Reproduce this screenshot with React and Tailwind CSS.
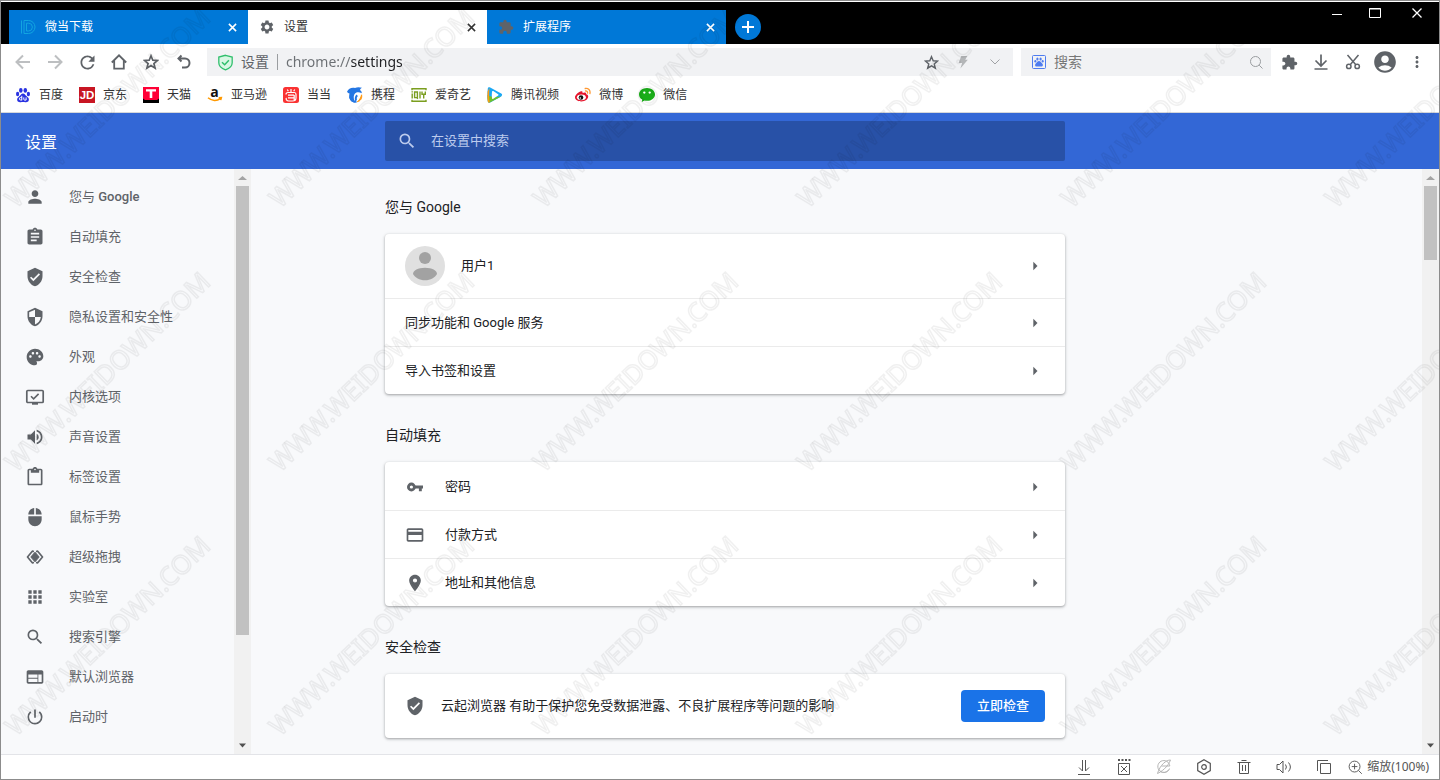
import {
  MdAccountCircle,
  MdApps,
  MdArrowRight,
  MdAssignment,
  MdContentPaste,
  MdCreditCard,
  MdExtension,
  MdMoreVert,
  MdMouse,
  MdPalette,
  MdPerson,
  MdPlace,
  MdPowerSettingsNew,
  MdRefresh,
  MdSearch,
  MdSecurity,
  MdSettings,
  MdVerifiedUser,
  MdVolumeUp,
  MdWeb,
} from 'react-icons/md';

const Svg = ({ size = 16, box = 16, children, className = '', ...rest }) => (
  <svg width={size} height={size} viewBox={`0 0 ${box} ${box}`} fill="none" aria-hidden="true" className={`shrink-0 ${className}`} {...rest}>
    {children}
  </svg>
);

const Stroke = ({ children, width = 1, ...rest }) => (
  <Svg stroke="currentColor" strokeWidth={width} {...rest}>
    {children}
  </Svg>
);

/* ---------- settings icons ---------- */

const KernelIcon = ({ size }) => (
  <Svg size={size} box={20}>
    <rect x="1.800" y="3.500" width="16.400" height="12" rx="1" stroke="currentColor" strokeWidth="1.7" />
    <path d="M6 9.3l2.6 2.6 5-5" stroke="currentColor" strokeWidth="1.6" />
    <path d="M7 15.500h6v2.200H7z" fill="currentColor" />
  </Svg>
);

const DragIcon = ({ size }) => (
  <Svg size={size} box={20}>
    <path d="M10 5.2l4.2 4.8-4.2 4.8L5.800 10z" fill="currentColor" stroke="currentColor" strokeWidth="1" strokeLinejoin="round" />
    <path d="M9 4.500L7.300 4.200 2.500 10l4.800 5.800 1.700-.3M11 4.500l1.700-.3 4.800 5.800-4.800 5.800-1.700-.3" stroke="currentColor" strokeWidth="1.700" strokeLinejoin="round" />
  </Svg>
);

const KeyIcon = ({ size, className }) => (
  <Svg size={size} box={20} className={className}>
    <circle cx="6.400" cy="10" r="3" stroke="currentColor" strokeWidth="2.800" />
    <path d="M10 8.600h8v2.900h-1.200v2.700h-2.900v-2.700H10z" fill="currentColor" />
  </Svg>
);

/* ---------- site logos ---------- */

const WeidownLogo = () => (
  <Stroke stroke="#12a5e0" width={1}>
    <path d="M1.500 1.500v13M4 14.500V1.500h4.500a6.500 6.500 0 0 1 0 13H4M6.500 12V4.200h2a3.900 3.900 0 0 1 0 7.800z" />
  </Stroke>
);

const BaiduLogo = () => (
  <Svg fill="#2932e1">
    <ellipse cx="5.800" cy="3.400" rx="1.800" ry="2.400" />
    <ellipse cx="10.300" cy="3.400" rx="1.800" ry="2.400" />
    <ellipse cx="2.600" cy="7" rx="1.600" ry="2.200" />
    <ellipse cx="13.400" cy="7" rx="1.600" ry="2.200" />
    <path d="M8 6.500c1.700 0 2.400 1.700 3.700 2.800 1.500 1.300 2.500 2.300 2.100 4-.4 1.800-2 2.100-3.500 1.900-1.600-.2-3-.2-4.600 0-1.500.2-3.100-.2-3.500-1.900-.3-1.700.6-2.700 2.100-4C5.600 8.200 6.300 6.500 8 6.500z" />
    <path d="M6.800 8.800v4.500M6.800 13H5.600a1.100 1.100 0 0 1 0-2.400h1.200M8.800 10.400v1.900q0 .8.800.8h1.500v-2.700" stroke="#fff" fill="none" />
  </Svg>
);

const JdLogo = () => (
  <Svg>
    <path d="M0 0h16v16H0z" fill="#c81623" />
    <text x="8" y="12.200" textAnchor="middle" fill="#fff" fontSize="11.500" fontWeight="700" fontFamily="Liberation Sans, sans-serif">JD</text>
  </Svg>
);

const TmallLogo = () => (
  <Svg>
    <path d="M0 0h16v16H0z" fill="#ff0036" />
    <path d="M0 11.500l2 1.500h12l2-1.500V16H0z" fill="#000" />
    <path d="M3 2.200h10v2.300H9.300V11H6.700V4.500H3z" fill="#fff" />
  </Svg>
);

const AmazonLogo = () => (
  <Svg className="overflow-visible">
    <text x="7.500" y="9.500" textAnchor="middle" fill="#111" fontSize="14" fontWeight="700" fontFamily="Open Sans, sans-serif">a</text>
    <path d="M1 10.800c4 3.400 9 3.400 12.300.8M11.700 10.700l2.700-.1-.7 2.500" stroke="#f90" strokeWidth="1.500" />
  </Svg>
);

const DangdangLogo = () => (
  <Svg>
    <rect width="16" height="16" rx="2.500" fill="#fa3232" />
    <path d="M8 2v3M4.300 2.500l1 1.800M11.700 2.500l-1 1.800M3 7.500c0-1.500 1-2 2-2h6.500c1.500 0 1.500 1 1.500 2v3.500c0 2-1.500 3-3.500 3H6c-2.500 0-3.500-2-2.500-3M5 8.200h6M5 10.800h6M11.200 8v5" stroke="#fff" strokeWidth="1.200" />
  </Svg>
);

const CtripLogo = () => (
  <Svg>
    <path d="M0 4.700C1.500 1.500 4.500.2 8 1c2-.9 4.500-.9 7-.2-1.200.7-1.700 1.400-2 2.200 1.200.8 1.700 1.800 1.800 3.200C12 4.800 9.500 5 8 6.500 6.300 8.500 6.300 12 8.500 15.800 3.500 15.500 1.200 11 2.500 6.500 1.500 6.300.6 5.700 0 4.700z" fill="#2577e3" />
    <path d="M3 9.500c.6 3.200 3 5.300 6.500 5.200M9 13.500c-.5-2-.2-4 1.200-5.300" stroke="#2577e3" strokeWidth="1.900" />
    <path d="M14.600 7.800c.6 3.200-.8 6.200-4.300 6.900 2.100-1.500 3.500-3.700 4.300-6.900z" fill="#ff9a14" stroke="#ff9a14" />
  </Svg>
);

const IqiyiLogo = () => (
  <Svg stroke="#7b9e1f" strokeWidth="1.400">
    <path d="M1 3.200V1.700h14v1.500M1 12.800v1.500h14v-1.500" />
    <path d="M1.200 6.500v5M1.200 4.200v1.200M3.600 5h2.800v5.600H3.600zM5.500 10l1.300 1.800M9 4.400v7.200M11 4.400v2.800h3.300V4.400M12.700 7.200v4.400" />
  </Svg>
);

const TencentLogo = () => (
  <Svg>
    <path d="M.8 1.600C1 .2 2.200.1 3.200.6l11 6c1.200.7 1.300 2 0 2.800l-11 6c-1.200.6-2.200.2-2.400-1.200-.5-4-.5-8.400 0-12.600z" fill="#1ba8f5" />
    <path d="M.5 8c0 2.200 0 4.200.3 6.300.2 1.300 1.300 1.600 2.400 1l11-5.900C11 9.800 5 11 .5 8z" fill="#6fc12c" />
    <path d="M.6 4.500C.4 8 .5 11.500.8 14.300c.2 1.200 1.100 1.500 2 1.200C2 11 2 7.500 2.500 1z" fill="#ff9b12" />
    <path d="M5 4.700c.1-.8.700-.9 1.300-.6l4.800 3.100c.6.400.6 1 0 1.400l-4.800 3.200c-.7.400-1.200.2-1.300-.6-.3-2.200-.3-4.300 0-6.500z" fill="#fff" />
  </Svg>
);

const WeiboLogo = () => (
  <Svg>
    <path d="M6.300 4.200c1-.3 1.600.4 1.200 1.800 2-.8 4-.8 3.700 1.200 1.300.4 2 1.100 2 2.300 0 2.500-3 4.900-6.800 4.900C3 14.400 0 12.700 0 10.200 0 7.800 3.800 4.800 6.300 4.200z" fill="#e6162d" />
    <ellipse cx="6.400" cy="10.300" rx="4.500" ry="2.900" fill="#fff" />
    <circle cx="6" cy="10.500" r="2.300" fill="#111" />
    <circle cx="5.300" cy="11" r=".8" fill="#fff" />
    <path d="M10.200 1.500c3-.6 5.500 1.800 4.700 5M10.500 4c1.400-.2 2.300.7 2 2" stroke="#ff9933" strokeWidth="1.300" strokeLinecap="round" />
  </Svg>
);

const WechatLogo = () => (
  <Svg>
    <path d="M8 1c4.500 0 8 2.800 8 6.400s-3.500 6.400-8 6.400c-.9 0-1.700-.1-2.500-.3L2.800 15l.4-2.500C1.200 11.400 0 9.500 0 7.400 0 3.800 3.500 1 8 1z" fill="#1aad19" />
    <ellipse cx="5.300" cy="5.600" rx="1.200" ry="1.100" fill="#fff" />
    <ellipse cx="10.700" cy="5.600" rx="1.200" ry="1.100" fill="#fff" />
  </Svg>
);

const PawIcon = () => (
  <Svg>
    <rect x="1.500" y="1.500" width="13" height="13" rx="1" stroke="#4e7cf0" />
    <g fill="#4e7cf0">
      <ellipse cx="6.400" cy="4.900" rx="1.100" ry="1.500" />
      <ellipse cx="9.600" cy="4.900" rx="1.100" ry="1.500" />
      <ellipse cx="4.300" cy="7.300" rx="1" ry="1.300" />
      <ellipse cx="11.700" cy="7.300" rx="1" ry="1.300" />
      <path d="M8 7c1.500 0 2 1.500 3 2.300 1.300 1 1.300 3.300-.7 3.300-1 0-1.300-.2-2.300-.2s-1.300.2-2.300.2c-2 0-2-2.300-.7-3.300C6 8.500 6.500 7 8 7z" />
    </g>
  </Svg>
);

/* ---------- data ---------- */

const tabs = [
  { title: '微当下载', icon: <WeidownLogo />, active: false },
  { title: '设置', icon: <MdSettings size={16} className="text-[#5f6368]" />, active: true },
  { title: '扩展程序', icon: <MdExtension size={16} className="text-[#5f6368]" />, active: false },
];

const bookmarks = [
  ['百度', BaiduLogo],
  ['京东', JdLogo],
  ['天猫', TmallLogo],
  ['亚马逊', AmazonLogo],
  ['当当', DangdangLogo],
  ['携程', CtripLogo],
  ['爱奇艺', IqiyiLogo],
  ['腾讯视频', TencentLogo],
  ['微博', WeiboLogo],
  ['微信', WechatLogo],
];

const menu = [
  [<>您与 <span className="font-medium">Google</span></>, MdPerson],
  ['自动填充', MdAssignment],
  ['安全检查', MdVerifiedUser],
  ['隐私设置和安全性', MdSecurity],
  ['外观', MdPalette],
  ['内核选项', KernelIcon],
  ['声音设置', MdVolumeUp],
  ['标签设置', MdContentPaste],
  ['鼠标手势', MdMouse],
  ['超级拖拽', DragIcon],
  ['实验室', MdApps],
  ['搜索引擎', MdSearch],
  ['默认浏览器', MdWeb],
  ['启动时', MdPowerSettingsNew],
];

const navButtons = [
  ['后退', <Stroke width={2} className="text-[#bdbfc1]"><path d="M15 8H2M8 1.500L1.500 8 8 14.500" /></Stroke>],
  ['前进', <Stroke width={2} className="text-[#bdbfc1]"><path d="M1 8h13M8 1.500L14.500 8 8 14.500" /></Stroke>],
  ['刷新', <MdRefresh size={21} />],
  ['主页', <Stroke width={1.8}><path d="M.8 8.500L8 1.300l7.200 7.200M3.200 6.500v8.200h9.600V6.500" /></Stroke>],
  ['收藏', <Stroke width={1.7}><path d="M8 1.800l1.800 4.400 4.700.3-3.600 3 1.200 4.600L8 11.500l-4.100 2.600 1.200-4.600-3.600-3 4.700-.3z" /></Stroke>],
  ['恢复', <Stroke width={2}><path d="M6.500 1.500L3.500 4.500l3 3M4 4.500h6a4.500 4.500 0 0 1 0 9H7" /></Stroke>],
];

const toolButtons = [
  ['扩展', <MdExtension size={17} />],
  ['下载', <Stroke width={1.700}><path d="M8 .5v11M2.500 6.500L8 12l5.500-5.500M1.500 15h13" /></Stroke>],
  ['截图', <Stroke width={1.5}><path d="M2.500 1l8.300 9.800M13.500 1L5.200 10.800" /><circle cx="3.800" cy="12.400" r="2.200" /><circle cx="12.200" cy="12.400" r="2.200" /></Stroke>],
  ['用户', <MdAccountCircle size={26} />],
  ['菜单', <MdMoreVert size={18} />],
];

const statusButtons = [
  ['下载', <Stroke><path d="M6.500 1v11M9.500 1v11M3 8.500l3.500 3.500M13 8.500L9.500 12M2 15.500h12" /></Stroke>],
  ['广告拦截', <Stroke><path d="M2.500 4.500h11v11h-11zM5 7l6 6M11 7l-6 6" /><path d="M2 1h2M5.500 1h2M9 1h2M12.500 1h2" strokeWidth="2" /></Stroke>],
  ['兼容模式', <Stroke className="text-[#b5b5b5]"><path d="M13.500 9.500a6 6 0 1 1 .3-2.500H5.500M13 10.500a6 6 0 0 1-9 1.500M14.500 1C10 1 4 6 1.500 14.500 5 13 12 8 14.500 1z" /></Stroke>],
  ['设置', <Stroke width={1.2}><path d="M8 .8l6.300 3.600v7.200L8 15.200l-6.300-3.600V4.400z" /><circle cx="8" cy="8" r="2.300" /></Stroke>],
  ['清理', <Stroke><path d="M1.500 3.500h13M5.500 1.500h5M3.500 3.500v11h9v-11M6.500 6v6M9.500 6v6" /></Stroke>],
  ['声音', <Stroke><path d="M1 5.500h2.500L7 2v12l-3.500-3.500H1zM9.500 5.500q1.800 2.500 0 5M12.500 3.500q3.800 4.500 0 9" /></Stroke>],
  ['窗口', <Stroke><path d="M4.500 4.500h10v10h-10zM1.500 12V1.500H12" /></Stroke>],
];

/* ---------- window chrome ---------- */

const Tab = ({ title, icon, active }) => (
  <div className={`flex w-[239px] items-center gap-[9px] pr-2 pl-[11px] ${active ? 'bg-white text-[#333]' : 'bg-[#0078d7] text-white'}`}>
    {icon}
    <span className="grow">{title}</span>
    <button aria-label={`关闭 ${title}`} className="flex size-4 items-center justify-center">
      <Stroke size={9} box={10} width={1.7}><path d="M1 1l8 8M9 1L1 9" /></Stroke>
    </button>
  </div>
);

const TitleBar = () => (
  <header className="flex h-[42px] justify-between bg-black">
    <div className="flex pt-2 pl-2 text-xs">
      {tabs.map((tab) => <Tab key={tab.title} {...tab} />)}
      <button aria-label="新标签页" className="mt-1 ml-[9px] flex size-[26px] items-center justify-center rounded-full bg-[#0078d7] text-white">
        <Stroke size={12} box={12} width={2}><path d="M6 0v12M0 6h12" /></Stroke>
      </button>
    </div>
    <div className="flex h-[22px] items-center pr-0.5 text-white">
      <button aria-label="最小化" className="flex w-8 justify-center">
        <Stroke size={12} box={12}><path d="M1 7.500h10" /></Stroke>
      </button>
      <button aria-label="最大化" className="flex w-11 justify-center">
        <Stroke size={12} box={12}><path d="M.5 1.500h11v9H.5zM0 2h12" /></Stroke>
      </button>
      <button aria-label="关闭" className="flex w-10 justify-center">
        <Stroke size={12} box={12} width={1.3}><path d="M1.500 1.500l9 9M10.500 1.500l-9 9" /></Stroke>
      </button>
    </div>
  </header>
);

const ToolButtons = ({ items }) => items.map(([label, icon]) => (
  <button key={label} aria-label={label} className="flex w-8 shrink-0 justify-center">{icon}</button>
));

const Toolbar = () => (
  <div className="flex h-9 items-center bg-white px-1.5 text-[#5f6368]">
    <ToolButtons items={navButtons} />
    <div className="ml-2 flex h-7 min-w-0 grow items-center bg-[#f1f2f4] pr-0.5 pl-2.5 text-sm">
      <Svg size={17} box={16}>
        <path d="M8 1.200l6.300 1.700v5.300c0 3.300-2.800 5.500-6.300 6.800-3.500-1.300-6.300-3.500-6.300-6.800V2.900z" fill="#d8f7e4" stroke="#2fbf6c" strokeWidth="1.200" />
        <path d="M4.700 7.700l2.500 2.400 4-4.300" stroke="#2fbf6c" strokeWidth="1.400" />
      </Svg>
      <span className="ml-[7px]">设置</span>
      <span className="mx-2 h-4 w-px bg-[#9a9da0]" />
      <input
        aria-label="地址"
        defaultValue="chrome://settings"
        className="min-w-0 grow bg-[linear-gradient(90deg,#6b6f73_65px,#202124_65px)] bg-clip-text font-['Noto_Sans',sans-serif] text-transparent outline-none"
      />
      <button aria-label="添加书签" className="flex w-8 shrink-0 justify-center">
        <Stroke size={15} width={1.5}><path d="M8 1.800l1.800 4.400 4.700.3-3.600 3 1.200 4.600L8 11.500l-4.100 2.600 1.200-4.600-3.600-3 4.700-.3z" /></Stroke>
      </button>
      <button aria-label="极速模式" className="flex w-8 shrink-0 justify-center">
        <Svg size={14}><path d="M6 1h7l-2.500 4.500h3L5 15.500l2-6.500H3z" fill="#b4b6b8" /></Svg>
      </button>
      <button aria-label="展开" className="flex w-8 shrink-0 justify-center text-[#a0a2a5]">
        <Stroke size={12} box={12}><path d="M1.500 3.500L6 8l4.500-4.500" /></Stroke>
      </button>
    </div>
    <label className="mr-0.5 ml-2 flex h-7 w-[250px] items-center bg-[#f1f2f4] pr-2 pl-2.5">
      <PawIcon />
      <input aria-label="搜索" placeholder="搜索" className="ml-[7px] min-w-0 grow text-sm outline-none placeholder:text-[#777]" />
      <Stroke size={14} box={14} className="text-[#9a9da0]"><circle cx="6.500" cy="6.500" r="5" /><path d="M10.200 10.200l3.300 3.300" /></Stroke>
    </label>
    <ToolButtons items={toolButtons} />
  </div>
);

const BookmarkBar = () => (
  <nav className="flex h-8 items-center gap-4 bg-white px-3.5 pb-0.5 text-xs text-[#333]">
    {bookmarks.map(([name, Logo]) => (
      <a key={name} href="#" className="flex items-center gap-2 whitespace-nowrap">
        <Logo />
        {name}
      </a>
    ))}
  </nav>
);

const StatusBar = () => (
  <footer className="flex h-[25px] items-center justify-end border-t border-[#e3e4e8] bg-white pr-2.5 text-[#555]">
    {statusButtons.map(([label, icon]) => (
      <button key={label} aria-label={label} className="flex w-10 justify-center">{icon}</button>
    ))}
    <button className="ml-1 flex items-center gap-1 font-['Noto_Sans','Noto_Sans_CJK_SC',sans-serif] text-xs whitespace-nowrap">
      <Stroke size={15}><circle cx="7" cy="7" r="5.800" /><path d="M7 4v6M4 7h6M11.200 11.200l3.500 3.500" /></Stroke>
      缩放(100%)
    </button>
  </footer>
);

/* ---------- settings page ---------- */

const Scrollbar = ({ thumb, rest }) => (
  <div aria-hidden="true" className="flex w-[17px] shrink-0 flex-col items-center bg-[#f1f1f1]">
    <Svg size={17} box={17}><path d="M8.500 7L13 11H4z" fill="#a3a3a3" /></Svg>
    <div className={`w-[13px] bg-[#c1c1c1] ${thumb}`} />
    <div className={rest} />
    <Svg size={17} box={17}><path d="M5 6.500h7l-3.500 4z" fill="#505050" /></Svg>
  </div>
);

const Section = ({ title, children }) => (
  <section>
    <h2 className="mb-[17px] text-sm leading-5">{title}</h2>
    <div className="rounded-sm bg-white shadow-[0_1px_2px_rgba(60,64,67,0.3),0_1px_3px_1px_rgba(60,64,67,0.15)]">
      {children}
    </div>
  </section>
);

const LinkRow = ({ icon: Icon, label }) => (
  <button className="flex h-12 w-full items-center border-t border-[#ebebeb] px-5 text-left first:border-transparent">
    {Icon && <Icon size={20} className="mr-5 text-[#5f6368]" />}
    <span className="grow">{label}</span>
    <MdArrowRight size={20} className="text-[#5f6368]" />
  </button>
);

const Avatar = () => (
  <Svg size={40} box={40}>
    <circle cx="20" cy="20" r="20" fill="#e0e0e0" />
    <circle cx="20" cy="12" r="6" fill="#a2a2a2" />
    <path d="M8 28c0-3.500 5-6.300 12-6.300S32 24.500 32 28c-2 3.700-6.500 6.300-12 6.300S10 31.700 8 28z" fill="#a2a2a2" />
  </Svg>
);

const SettingsHeader = () => (
  <div className="box-content grid h-14 grid-cols-[calc(50%-335px)_minmax(0,680px)_1fr] items-center border-t border-[#d5d7db] bg-[#3367d6] text-white">
    <h1 className="pt-1 pl-6 text-base">设置</h1>
    <label className="flex h-10 items-center rounded-xs bg-[#2851a7] px-3">
      <MdSearch size={20} className="text-[#bccbed]" />
      <input aria-label="在设置中搜索" placeholder="在设置中搜索" className="ml-3.5 min-w-0 grow text-[13px] outline-none placeholder:text-[#bccbed]" />
    </label>
  </div>
);

const Sidebar = () => (
  <aside className="flex w-[250px]">
    <nav className="grow pt-2">
      {menu.map(([label, Icon], i) => (
        <a key={i} href="#" className="flex h-10 items-center gap-6 pl-6 text-[#5f6368]">
          <Icon size={20} />
          <span>{label}</span>
        </a>
      ))}
    </nav>
    <Scrollbar thumb="grow-[449]" rest="grow-[102]" />
  </aside>
);

const SettingsPage = () => (
  <div className="grid grow grid-cols-[calc(50%-335px)_minmax(0,680px)_1fr] bg-[#f8f9fb] text-[13px] text-[#202124]">
    <Sidebar />
    <main className="flex flex-col gap-[31px] pt-7 pb-4">
      <Section title="您与 Google">
        <button className="flex h-16 w-full items-center gap-4 px-5 text-left">
          <Avatar />
          <span className="grow">用户1</span>
          <MdArrowRight size={20} className="text-[#5f6368]" />
        </button>
        <LinkRow label="同步功能和 Google 服务" />
        <LinkRow label="导入书签和设置" />
      </Section>
      <Section title="自动填充">
        <LinkRow icon={KeyIcon} label="密码" />
        <LinkRow icon={MdCreditCard} label="付款方式" />
        <LinkRow icon={MdPlace} label="地址和其他信息" />
      </Section>
      <Section title="安全检查">
        <div className="flex h-16 items-center gap-4 px-5">
          <MdVerifiedUser size={20} className="text-[#5f6368]" />
          <p className="grow">云起浏览器 有助于保护您免受数据泄露、不良扩展程序等问题的影响</p>
          <button className="h-8 rounded-sm bg-[#1a73e8] px-4 font-medium text-white">立即检查</button>
        </div>
      </Section>
    </main>
    <div className="flex justify-end">
      <Scrollbar thumb="grow-[74]" rest="grow-[477]" />
    </div>
  </div>
);

const Watermark = () => (
  <svg aria-hidden="true" className="pointer-events-none absolute inset-0 size-full">
    <defs>
      <pattern id="watermark" width="264" height="264" y="-48" patternUnits="userSpaceOnUse">
        <text
          transform="translate(15 256) rotate(-44)"
          fill="none"
          stroke="#000"
          strokeOpacity="0.06"
          strokeWidth="1.500"
          fontSize="26"
          fontFamily="Noto Sans, sans-serif"
        >
          WWW.WEIDOWN.COM
        </text>
      </pattern>
    </defs>
    <rect width="100%" height="100%" fill="url(#watermark)" />
  </svg>
);

const App = () => (
  <div className="relative flex min-h-screen flex-col border border-[#8c8c8c] bg-white pt-px font-['Roboto','Noto_Sans_CJK_SC',sans-serif]">
    <TitleBar />
    <Toolbar />
    <BookmarkBar />
    <SettingsHeader />
    <SettingsPage />
    <StatusBar />
    <Watermark />
  </div>
);

export default App;
